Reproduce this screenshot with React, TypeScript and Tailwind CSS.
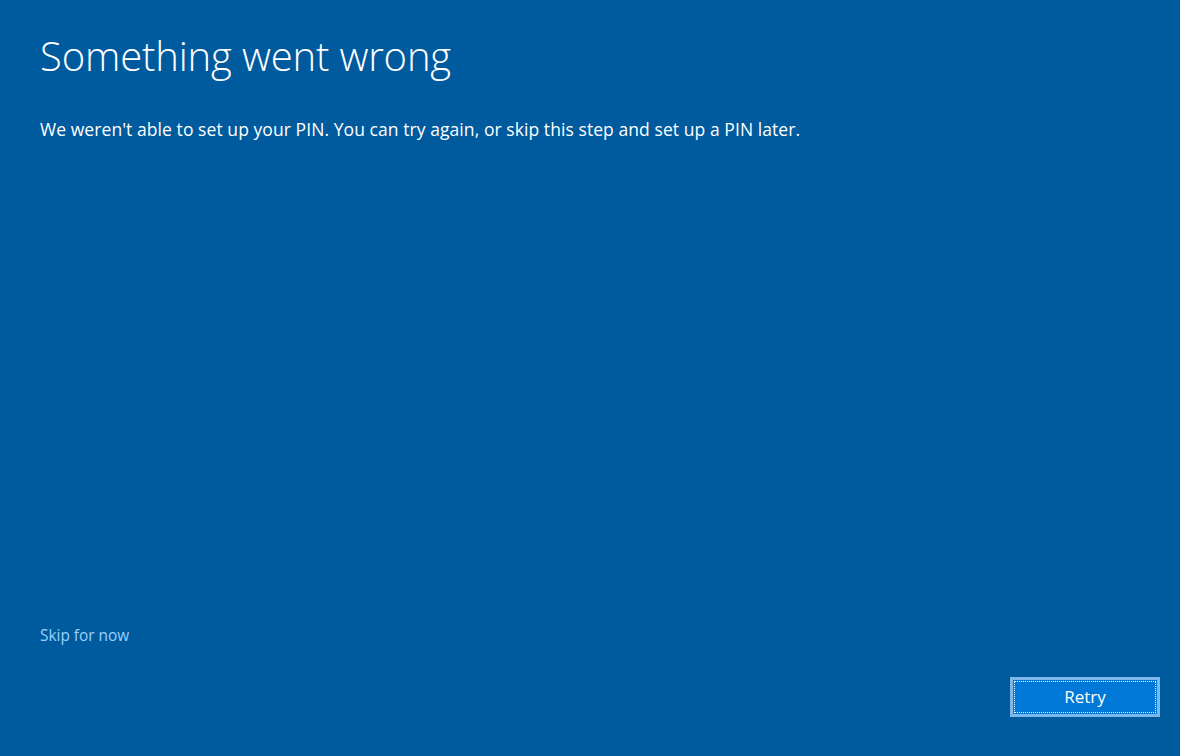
import React from 'react';

const App: React.FC = () => {
  return (
    <div
      className="w-full h-[756px] bg-[#005a9e] text-white flex flex-col px-10 pt-[28px] pb-[39px] overflow-hidden"
      style={{ fontFamily: '"Open Sans", "Noto Sans", sans-serif' }}
    >
      {/* Header */}
      <h1 className="text-[40px] font-light leading-[56px] tracking-[-0.15px]">Something went wrong</h1>
      <p className="mt-[34px] text-[17.5px] leading-[22px] tracking-[0.07px]">
        We weren't able to set up your PIN. You can try again, or skip this step and set up a PIN later.
      </p>

      <div className="flex-1" />

      {/* Footer */}
      <div className="flex flex-col">
        <a className="text-[15.4px] leading-[20px] text-[#99d1ff] self-start cursor-pointer">Skip for now</a>
        <div className="flex justify-end mt-[31px] -mr-5">
          <button className="w-[150px] h-[40px] border-[3px] border-[#7eb8ea] bg-[#0078d7] p-[1px]">
            <span className="flex h-full w-full items-center justify-center border border-dotted border-white text-[17px]">
              Retry
            </span>
          </button>
        </div>
      </div>
    </div>
  );
};

export default App;
